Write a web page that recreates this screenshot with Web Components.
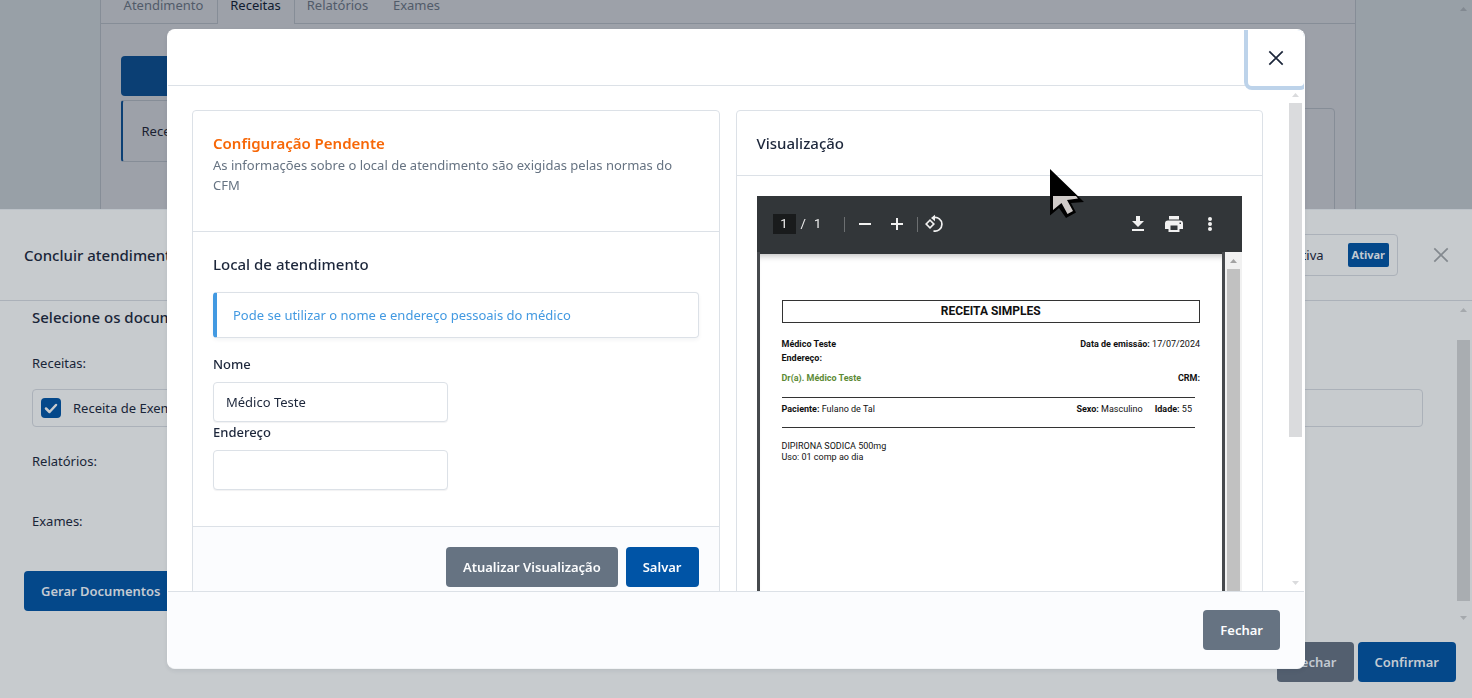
<!DOCTYPE html>
<html lang="pt-BR">
<head>
<meta charset="utf-8">
<meta name="viewport" content="width=device-width, initial-scale=1">
<title>Concluir atendimento</title>
<style>
  html, body { margin: 0; height: 100%; overflow: hidden; }
  body { font: 13px/20px "Noto Sans", "Open Sans", sans-serif; color: #1d273b; background: #98a0a7; }
</style>
</head>
<body>
<app-shell></app-shell>
<script>
const define = (name, html, setup) => customElements.define(name, class extends HTMLElement {
  constructor() {
    super();
    const tpl = document.createElement('template');
    tpl.innerHTML = html;
    this.attachShadow({ mode: 'open' }).appendChild(tpl.content.cloneNode(true));
  }
  connectedCallback() { if (setup) setup.call(this, this.shadowRoot); }
});

/* Button: --bg and --fg set its colours */
define('ui-button', `
<style>
  :host { display: inline-flex; height: 40px; flex: none; }
  button { font: inherit; font-weight: 600; line-height: 20px; margin: 0; width: 100%; padding: 0 var(--pad, 17px);
    border: 0; border-radius: 4px; background: var(--bg, #0054a6); color: var(--fg, #fcfdfe); white-space: nowrap; cursor: pointer; }
  :host([small]) { height: 24px; font-size: 11px; --pad: 4px; }
  :host([small]) button { border-radius: 2px; font-weight: 700; }
</style>
<button type="button"><slot></slot></button>`);

/* Close button with a cross */
define('ui-close', `
<style>
  :host { display: block; flex: none; }
  button { display: flex; align-items: center; justify-content: center; width: 100%; height: 100%; margin: 0; padding: 0;
    border: 0; background: none; color: inherit; cursor: pointer; }
  svg { display: block; width: 16px; height: 16px; }
</style>
<button type="button" aria-label="Fechar"><svg viewBox="0 0 16 16" fill="none" stroke="currentColor" stroke-width="1.700"><path d="M1.300 1.300l13.400 13.400M14.700 1.300L1.300 14.700"/></svg></button>`);

/* Scroll bar: arrows and a thumb */
define('scroll-track', `
<style>
  :host { display: flex; flex-direction: column; align-items: center; width: 17px; flex: none; }
  svg { display: block; width: 7px; height: 4px; flex: none; margin: 7px 0 6px; fill: var(--arrow); }
  .thumb { width: 13px; background: var(--thumb); margin-top: var(--offset, 0); flex: var(--size, 1) 1 0; }
  .rest { flex: var(--rest, 0) 1 0; }
</style>
<svg viewBox="0 0 7 4"><path d="M3.500 0L7 4H0z"/></svg><div class="thumb"></div><div class="rest"></div>
<svg viewBox="0 0 7 4"><path d="M3.500 4L7 0H0z"/></svg>`);

/* Record page with its tabs */
define('record-page', `
<style>
  :host { display: flex; height: 209px; overflow: hidden; background: #98a0a7; color: #1a2132; }
  main { flex: 1; min-width: 0; }
  .panel { max-width: 1254px; margin: 0 auto; border: solid #868d97; border-width: 0 1px; background: #9da1a9; }
  nav { display: flex; line-height: 10px; }
  nav a { box-sizing: border-box; height: 24px; color: #515b69; text-decoration: none; text-align: center;
    border-bottom: 1px solid #868d97; white-space: nowrap; }
  nav a:nth-child(1) { width: 117px; padding-left: 10px; border-right: 1px solid #868d97; }
  nav a:nth-child(2) { width: 76px; color: #101b30; border-bottom-color: transparent; }
  nav a:nth-child(3) { width: 87px; border-left: 1px solid #868d97; }
  nav a:nth-child(4) { width: 72px; }
  nav span { flex: 1; border-bottom: 1px solid #868d97; }
  .cols { display: flex; gap: 16px; padding: 32px 20px; height: 300px; }
  .list { width: 290px; display: flex; flex-direction: column; gap: 4px; --bg: #0b3f74; --fg: #aeb5bd; }
  .item { box-sizing: border-box; height: 62px; padding: 20px 19px; border: 1px solid #868d97; border-left: 2px solid #0b3f74; border-radius: 3px; }
  .card { flex: 1; margin-top: 52px; border: 1px solid #868d97; border-radius: 4px; }
  scroll-track { height: 698px; --arrow: #828991; --thumb: transparent; }
</style>
<main><div class="panel">
  <nav><a href="#atendimento">Atendimento</a><a href="#receitas">Receitas</a><a href="#relatorios">Relatórios</a><a href="#exames">Exames</a><span></span></nav>
  <div class="cols">
    <div class="list"><ui-button></ui-button><div class="item">Receita</div></div>
    <div class="card"></div>
  </div>
</div></main>
<scroll-track></scroll-track>`);

/* Bottom drawer that ends the appointment */
define('finish-drawer', `
<style>
  :host { display: flex; flex-direction: column; flex: 1; min-height: 0; box-sizing: border-box; border-top: 1px solid #bcc2c8; background: #c7cbce; color: #192538; }
  header { display: flex; align-items: center; height: 90px; padding: 0 24px; border-bottom: 1px solid #abb1b9; }
  h2, h3 { margin: 0; font-size: 15px; line-height: 24px; font-weight: 500; }
  h2 { flex: 1; }
  .sign { display: flex; align-items: center; gap: 24px; box-sizing: border-box; height: 42px; padding: 0 8px; border: 1px solid #abb1b9; border-radius: 4px; }
  ui-button { --bg: #04488a; --fg: #c3cad2; }
  ui-close { width: 20px; height: 40px; margin: 0 -3px 0 33px; color: #83898f; }
  .body { display: flex; flex: 1; min-height: 0; }
  .content { flex: 1; min-width: 0; padding: 4px 32px 0 32px; }
  p { margin: 0; height: 20px; }
  .doc { display: flex; align-items: center; gap: 12px; box-sizing: border-box; height: 38px; padding: 0 8px; margin: 16px 0 24px; border: 1px solid #abb1b9; border-radius: 4px; }
  input { appearance: none; margin: 0; width: 20px; height: 20px; border-radius: 4px;
    background: #04488a url("data:image/svg+xml,%3Csvg xmlns='http://www.w3.org/2000/svg' viewBox='0 0 20 20'%3E%3Cpath d='M5 10.500l3.500 3.500 6.500-7' fill='none' stroke='%23c7cbce' stroke-width='2.500' stroke-linecap='round' stroke-linejoin='round'/%3E%3C/svg%3E"); }
  .first { margin-top: 24px; }
  .next { margin-top: 40px; }
  .content ui-button { margin: 40px 0 0 -8px; }
  scroll-track { --arrow: #a5a9ad; --thumb: #a9adb1; --offset: 22px; --size: 261; --rest: 8; }
  footer { display: flex; justify-content: flex-end; gap: 4px; padding: 16px; }
  footer .muted { --bg: #535f6f; }
</style>
<header><h2>Concluir atendimento</h2>
  <div class="sign"><span>Assinatura inativa</span><ui-button small>Ativar</ui-button></div><ui-close></ui-close></header>
<div class="body">
  <div class="content">
    <h3>Selecione os documentos</h3>
    <p class="first">Receitas:</p>
    <div class="doc"><input type="checkbox" id="doc" checked><label for="doc">Receita de Exemplo</label></div>
    <p>Relatórios:</p>
    <p class="next">Exames:</p>
    <ui-button>Gerar Documentos</ui-button>
  </div>
  <scroll-track></scroll-track>
</div>
<footer><ui-button class="muted">Fechar</ui-button><ui-button>Confirmar</ui-button></footer>`);

/* Card with header, body and footer slots */
define('ui-card', `
<style>
  :host { display: block; min-width: 0; border: 1px solid #dce1e7; border-radius: 4px; background: #fff; }
  .head { padding: 20px; border-bottom: 1px solid #dce1e7; }
  .body { padding: 20px; }
  .foot { padding: 20px; border-top: 1px solid #dce1e7; background: #fbfcfe; display: flex; justify-content: flex-end; gap: 8px; }
  :host([plain]) .foot { display: none; }
</style>
<div class="head"><slot name="head"></slot></div><div class="body"><slot></slot></div><div class="foot"><slot name="foot"></slot></div>`);

define('text-field', `
<style>
  :host { display: block; width: 235px; }
  label { display: block; font-weight: 500; line-height: 20px; margin-bottom: 8px; }
  input { display: block; box-sizing: border-box; width: 100%; height: 40px; margin: 0; padding: 0 12px; border: 1px solid #dce1e7; border-radius: 4px;
    font: inherit; color: inherit; background: #fff; box-shadow: 0 1px 1px rgba(29,39,59,.06); }
</style>
<label for="f"></label><input id="f" type="text">`, function (root) {
  root.querySelector('label').textContent = this.getAttribute('label');
  root.querySelector('input').value = this.getAttribute('value') || '';
});

define('info-note', `
<style>
  :host { display: block; box-sizing: border-box; height: 46px; padding: 12px 16px; border: 1px solid #dce1e7; border-left: 4px solid #4299e1; border-radius: 4px;
    color: #4299e1; box-shadow: 0 2px 4px rgba(29,39,59,.05); }
</style><slot></slot>`);

define('place-form', `
<style>
  :host { display: block; }
  h3 { margin: 0; font-size: 15px; line-height: 24px; font-weight: 500; }
  .warn { color: #f76707; font-weight: 600; line-height: 24px; }
  p { margin: 0 0 16px; color: #667382; }
  info-note { margin: 16px 0; }
  .fields { padding-bottom: 16px; }
</style>
<ui-card>
  <div slot="head"><h3 class="warn">Configuração Pendente</h3><p>As informações sobre o local de atendimento são exigidas pelas normas do CFM</p></div>
  <h3>Local de atendimento</h3>
  <info-note>Pode se utilizar o nome e endereço pessoais do médico</info-note>
  <div class="fields"><text-field label="Nome" value="Médico Teste"></text-field><text-field label="Endereço"></text-field></div>
  <ui-button slot="foot" style="--bg:#667382">Atualizar Visualização</ui-button><ui-button slot="foot">Salvar</ui-button>
</ui-card>`);

/* PDF viewer tool bar */
define('pdf-toolbar', `
<style>
  :host { display: flex; align-items: center; height: 56px; padding: 0 20px 0 16px; background: #323639; color: #f1f1f1; font: 13px/20px Roboto, sans-serif; }
  input { width: 23px; height: 20px; box-sizing: border-box; margin: 0 5px 0 0; padding: 0; border: 0; background: #191b1c; color: inherit; font: inherit; text-align: center; }
  .total { width: 39px; display: flex; gap: 8px; }
  i { width: 1px; height: 15px; background: #6c6f71; margin: 0 4px; }
  button { display: block; width: 32px; height: 32px; margin: 0; padding: 6px; border: 0; background: none; color: inherit; }
  button svg { display: block; width: 20px; height: 20px; fill: currentColor; }
  .gap { flex: 1; }
  .right { display: flex; gap: 4px; margin-right: -4px; }
  .rotate { margin-left: -4px; }
</style>
<input aria-label="Página" value="1"><span class="total"><span>/</span><span>1</span></span><i></i>
<button type="button" aria-label="Diminuir zoom"><svg viewBox="0 0 20 20"><path d="M4 9h12v2H4z"/></svg></button>
<button type="button" aria-label="Aumentar zoom"><svg viewBox="0 0 20 20"><path d="M4 9h5V4h2v5h5v2h-5v5H9v-5H4z"/></svg></button>
<i></i>
<button type="button" class="rotate" aria-label="Girar"><svg viewBox="0 0 20 20"><path d="M6 5L11 10L6 15L1 10zM6 7.300L3.300 10L6 12.700L8.700 10z" fill-rule="evenodd"/><path d="M9.500 3.700a6.800 6.800 0 1 1 0 13.200" fill="none" stroke="currentColor" stroke-width="1.700"/><path d="M11 .800v6.400L7 4z"/></svg></button>
<span class="gap"></span>
<div class="right">
<button type="button" aria-label="Baixar"><svg viewBox="0 0 20 20"><path d="M8 2h4v5h4l-6 6-6-6h4zM4 15h12v2H4z"/></svg></button>
<button type="button" aria-label="Imprimir"><svg viewBox="0 0 20 20"><path fill-rule="evenodd" d="M5 2h10v3.500H5zM4 6.500h12a3 3 0 0 1 3 3V15h-3.500v3h-11v-3H1V9.500a3 3 0 0 1 3-3zM6.500 11.500v4.500h7v-4.500zM15.500 8.500v1.500H17V8.500z"/></svg></button>
<button type="button" aria-label="Mais ações"><svg viewBox="0 0 20 20"><circle cx="10" cy="5" r="2"/><circle cx="10" cy="10" r="2"/><circle cx="10" cy="15" r="2"/></svg></button>
</div>`);

/* The prescription sheet */
define('pdf-sheet', `
<style>
  :host { display: block; box-sizing: border-box; min-height: 600px; padding: 46px 22px 0; background: #fff; color: #111; font: 9px/14px Roboto, sans-serif; }
  h1 { box-sizing: border-box; height: 23px; margin: 0 0 14px; border: 1px solid #333; font-size: 12px; line-height: 20px; text-align: center; font-weight: 700; }
  .row { display: flex; justify-content: space-between; }
  .doctor { margin-top: 6px; }
  .doctor b:first-child { color: #5c8a35; }
  .patient { margin: 12px 5px 13px 0; padding: 4px 3px 0 0; border: solid #333; border-width: 1px 0; height: 31px; box-sizing: border-box; }
  .patient span + span { margin-left: 12px; }
  .drug { line-height: 11px; }
</style>
<h1>RECEITA SIMPLES</h1>
<div class="row"><b>Médico Teste</b><span><b>Data de emissão:</b> 17/07/2024</span></div>
<div><b>Endereço:</b></div>
<div class="row doctor"><b>Dr(a). Médico Teste</b><b>CRM:</b></div>
<div class="row patient"><span><b>Paciente:</b> Fulano de Tal</span><div><span><b>Sexo:</b> Masculino</span><span><b>Idade:</b> 55</span></div></div>
<div class="drug">DIPIRONA SODICA 500mg<br>Uso: 01 comp ao dia</div>`);

define('pdf-preview', `
<style>
  :host { display: block; }
  h3 { margin: 0; font-size: 15px; line-height: 24px; font-weight: 500; }
  .view { display: flex; height: 640px; }
  .paper { flex: 1; min-width: 0; box-sizing: border-box; border: solid #46494d; border-width: 0 3px; }
  .paper::before { content: ""; display: block; height: 2px; background: #323639; }
  pdf-sheet { box-shadow: inset 0 7px 6px -5px rgba(0,0,0,.25); }
  scroll-track { background: #f1f1f1; --arrow: #a3a3a3; --thumb: #c1c1c1; }
</style>
<ui-card plain>
  <h3 slot="head">Visualização</h3>
  <pdf-toolbar></pdf-toolbar>
  <div class="view"><div class="paper"><pdf-sheet></pdf-sheet></div><scroll-track></scroll-track></div>
</ui-card>`);

define('config-modal', `
<style>
  :host { position: fixed; inset: 0; display: flex; justify-content: center; padding: 29px 16px; }
  .dialog { position: relative; display: flex; flex-direction: column; box-sizing: border-box; width: 100%; max-width: 1138px; border: 1px solid #fff; border-bottom-color: #f2f4f6; border-radius: 8px;
    background: #fff; box-shadow: 0 2px 4px rgba(29,39,59,.08); overflow: hidden; }
  header { display: flex; justify-content: flex-end; height: 55px; border-bottom: 1px solid #dce1e7; flex: none; }
  ui-close { width: 56px; height: 56px; border-radius: 0 4px 4px 4px; box-shadow: 0 0 0 4px #bdd3ea; position: relative; color: #1d273b; background: #fff; }
  .scroll { display: flex; flex: 1; min-height: 0; }
  .grid { flex: 1; min-width: 0; overflow: hidden; display: grid; grid-template-columns: 1fr 1fr; gap: 16px; align-items: start; padding: 24px 24px 0; }
  scroll-track { --arrow: #dadbdd; --thumb: #dadbdd; --size: 334; --rest: 137; }
  footer { display: flex; justify-content: flex-end; padding: 18px 24px; border-top: 1px solid #dce1e7; background: #fbfcfe; flex: none; --bg: #667382; }
  .pointer { position: absolute; left: 882px; top: 139px; width: 36px; height: 52px; }
</style>
<div class="dialog" role="dialog" aria-modal="true">
  <header><ui-close></ui-close></header>
  <div class="scroll"><div class="grid"><place-form></place-form><pdf-preview></pdf-preview></div><scroll-track></scroll-track></div>
  <footer><ui-button>Fechar</ui-button></footer>
  <svg class="pointer" viewBox="0 0 36 52"><path d="M0 0L34 33 21 34 26 43.500 16 49 9 39 0 46.500z"/><path d="M3 27H26L28 29.500 17 31 23 42 17.500 45 11.500 34 3 41z" fill="#cfcac8"/></svg>
</div>`);

define('app-shell', `
<style>
  :host { display: flex; flex-direction: column; height: 100vh; }
  record-page { flex: none; }
</style>
<record-page></record-page><finish-drawer></finish-drawer><config-modal></config-modal>`);
</script>
</body>
</html>
